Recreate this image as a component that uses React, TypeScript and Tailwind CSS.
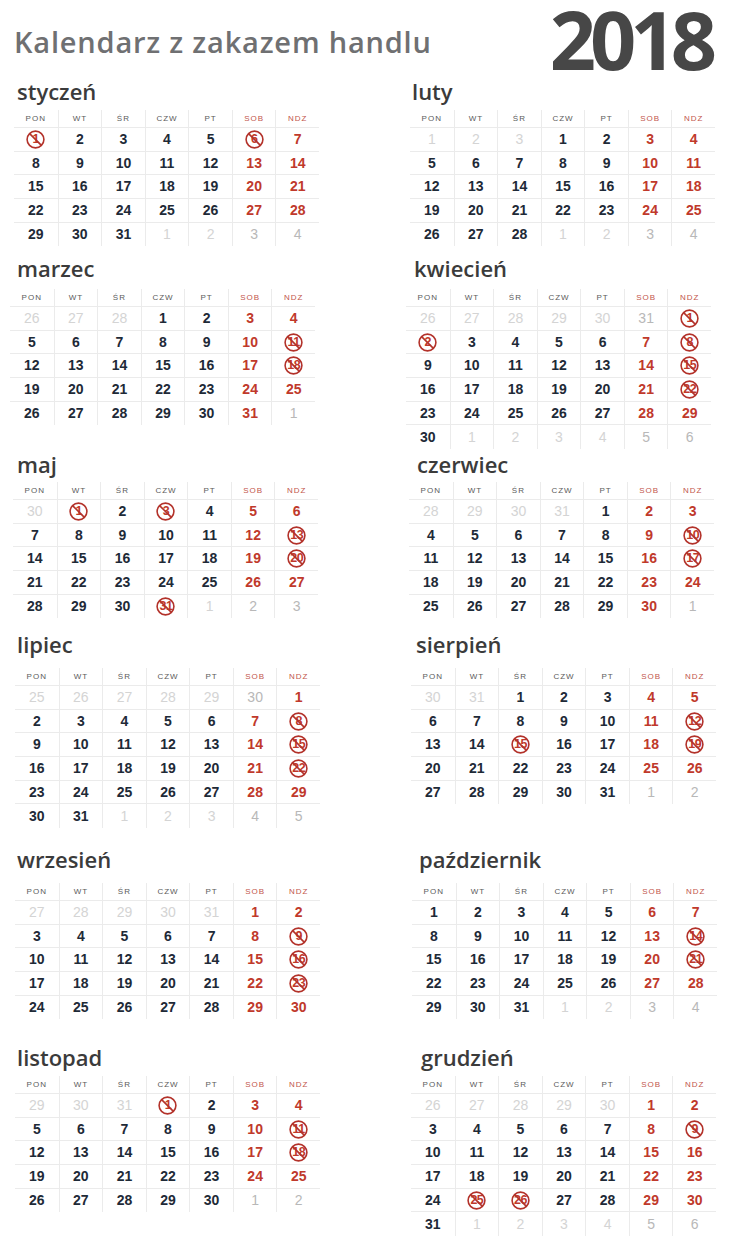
const LABELS = ['PON', 'WT', 'ŚR', 'CZW', 'PT', 'SOB', 'NDZ']

type Day = { d: number; cur: boolean }

type Month = {
  name: string
  m: number
  titleCls: string
  gridCls: string
  banned: number[]
  lead?: number[]
}

type Pair = { rowCls: string; gapCls: string; left: Month; right: Month }

function weeks(m: number, lead?: number[]): Day[][] {
  const offset = (new Date(2018, m, 1).getDay() + 6) % 7
  const total = new Date(2018, m + 1, 0).getDate()
  const prevTotal = new Date(2018, m, 0).getDate()
  const list: Day[] = []
  for (let i = offset - 1; i >= 0; i--) list.push({ d: prevTotal - i, cur: false })
  // the print has 1 2 3 instead of 29 30 31 in February, keep it
  if (lead) lead.forEach((d, i) => (list[i].d = d))
  for (let d = 1; d <= total; d++) list.push({ d, cur: true })
  let next = 1
  while (list.length % 7 !== 0) list.push({ d: next++, cur: false })
  const rows: Day[][] = []
  for (let i = 0; i < list.length; i += 7) rows.push(list.slice(i, i + 7))
  return rows
}

const pairs: Pair[] = [
  {
    rowCls: 'h-[177px]',
    gapCls: 'mt-[6px]',
    left: { name: 'styczeń', m: 0, titleCls: 'pl-[17px]', gridCls: 'ml-[14px]', banned: [1, 6] },
    right: { name: 'luty', m: 1, titleCls: 'pl-[40px]', gridCls: 'ml-[38px]', banned: [], lead: [1, 2, 3] },
  },
  {
    rowCls: 'h-[196px]',
    gapCls: 'mt-[8px]',
    left: { name: 'marzec', m: 2, titleCls: 'pl-[17px]', gridCls: 'ml-[10px]', banned: [11, 18] },
    right: { name: 'kwiecień', m: 3, titleCls: 'pl-[42px]', gridCls: 'ml-[34px]', banned: [1, 2, 8, 15, 22] },
  },
  {
    rowCls: 'h-[180px]',
    gapCls: 'mt-[5px]',
    left: { name: 'maj', m: 4, titleCls: 'pl-[17px]', gridCls: 'ml-[13px]', banned: [1, 3, 13, 20, 31] },
    right: { name: 'czerwiec', m: 5, titleCls: 'pl-[45px]', gridCls: 'ml-[37px]', banned: [10, 17] },
  },
  {
    rowCls: 'h-[215px]',
    gapCls: 'mt-[11px]',
    left: { name: 'lipiec', m: 6, titleCls: 'pl-[17px]', gridCls: 'ml-[15px]', banned: [8, 15, 22] },
    right: { name: 'sierpień', m: 7, titleCls: 'pl-[44px]', gridCls: 'ml-[39px]', banned: [12, 15, 19] },
  },
  {
    rowCls: 'h-[198px]',
    gapCls: 'mt-[11px]',
    left: { name: 'wrzesień', m: 8, titleCls: 'pl-[17px]', gridCls: 'ml-[15px]', banned: [9, 16, 23] },
    right: { name: 'październik', m: 9, titleCls: 'pl-[47px]', gridCls: 'ml-[40px]', banned: [14, 21] },
  },
  {
    rowCls: 'h-[200px]',
    gapCls: 'mt-[6px]',
    left: { name: 'listopad', m: 10, titleCls: 'pl-[17px]', gridCls: 'ml-[15px]', banned: [1, 11, 18] },
    right: { name: 'grudzień', m: 11, titleCls: 'pl-[49px]', gridCls: 'ml-[39px]', banned: [9, 25, 26] },
  },
]

function Banned({ d }: { d: number }) {
  return (
    <span className="relative inline-flex h-[19px] w-[19px] items-center justify-center text-[12.5px] font-bold tracking-[-0.5px] text-[#c0392b]">
      {d}
      <svg className="absolute inset-0" viewBox="0 0 19 19" fill="none">
        <circle cx="9.5" cy="9.5" r="8.4" stroke="#b3322a" strokeWidth="1.6" />
        <line x1="3.6" y1="3.6" x2="15.4" y2="15.4" stroke="#b3322a" strokeWidth="1.6" />
      </svg>
    </span>
  )
}

function DayCell({ day, col, last, banned }: { day: Day; col: number; last: boolean; banned: boolean }) {
  const weekend = col >= 5
  const color = !day.cur
    ? weekend
      ? 'font-normal text-[#b8b8b8]'
      : 'font-normal text-[#d4d4d4]'
    : weekend
      ? 'font-bold text-[#c0392b]'
      : 'font-bold text-[#1e2a37]'
  return (
    <div
      className={`flex h-[23.7px] items-center justify-center border-[#ebebeb] ${col > 0 ? 'border-l' : ''} ${
        last ? '' : 'border-b'
      }`}
    >
      {banned ? <Banned d={day.d} /> : <span className={`text-[14px] ${color}`}>{day.d}</span>}
    </div>
  )
}

function MonthBlock({ month, gapCls }: { month: Month; gapCls: string }) {
  const rows = weeks(month.m, month.lead)
  return (
    <div>
      <div className={`h-[26px] font-['Open_Sans',sans-serif] text-[22px] leading-[26px] font-semibold text-[#3b3b3b] ${month.titleCls}`}>
        {month.name}
      </div>
      <div className={`grid w-[305px] grid-cols-7 font-['Liberation_Sans',Arial,sans-serif] ${month.gridCls} ${gapCls}`}>
        {LABELS.map((l, i) => (
          <div
            key={l}
            className={`flex h-[18px] items-center justify-center border-b border-[#ebebeb] text-[8px] tracking-[1px] ${
              i > 0 ? 'border-l' : ''
            } ${i >= 5 ? 'text-[#c2554c]' : 'text-[#5a5a5a]'}`}
          >
            {l}
          </div>
        ))}
        {rows.map((week, r) =>
          week.map((day, c) => (
            <DayCell
              key={`${r}-${c}`}
              day={day}
              col={c}
              last={r === rows.length - 1}
              banned={day.cur && month.banned.includes(day.d)}
            />
          ))
        )}
      </div>
    </div>
  )
}

export default function App() {
  return (
    <div className="min-h-[1250px] w-[745px] bg-white">
      <div className="flex h-[78px] items-start justify-between">
        <h1 className="mt-[27px] pl-[14px] font-['Open_Sans',sans-serif] text-[29px] leading-none font-semibold tracking-[0.8px] text-[#6f7072]">
          Kalendarz z zakazem handlu
        </h1>
        <div className="mt-[3px] pr-[34px] font-['Open_Sans',sans-serif] text-[81px] leading-[72px] font-bold tracking-[-6px] text-[#474747]">
          2018
        </div>
      </div>
      {pairs.map((p) => (
        <div key={p.left.name} className={`grid grid-cols-[372px_1fr] items-start ${p.rowCls}`}>
          <MonthBlock month={p.left} gapCls={p.gapCls} />
          <MonthBlock month={p.right} gapCls={p.gapCls} />
        </div>
      ))}
    </div>
  )
}
